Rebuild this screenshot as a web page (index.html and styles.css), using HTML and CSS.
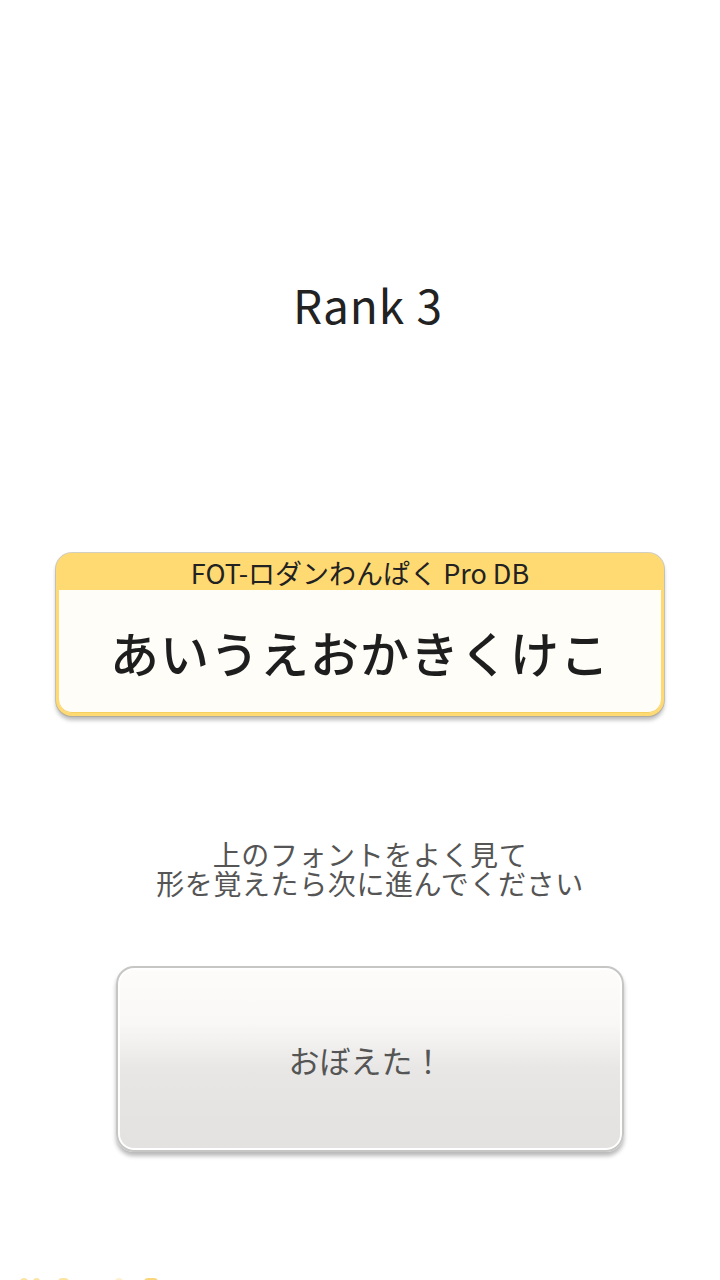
FILE: index.html
```html
<!DOCTYPE html>
<html lang="ja">
<head>
<meta charset="utf-8">
<title>Rank 3</title>
<link rel="stylesheet" href="styles.css">
</head>
<body>
<main class="screen">
  <h1 class="rank">Rank 3</h1>
  <section class="card">
    <div class="card-head">FOT-ロダンわんぱく Pro DB</div>
    <div class="card-body">あいうえおかきくけこ</div>
  </section>
  <p class="hint">上のフォントをよく見て<br>形を覚えたら次に進んでください</p>
  <button class="ok-btn" type="button">おぼえた！</button>
  <div class="footer">
    <span class="dot d1"></span><span class="dot d2"></span><span class="dot d3"></span><span class="dot d4"></span><span class="dot d5"></span>
  </div>
</main>
</body>
</html>
```
FILE: styles.css
```css
html, body {
  margin: 0;
  padding: 0;
  background: #ffffff;
}
body {
  width: 720px;
  height: 1280px;
  overflow: hidden;
  font-family: "Noto Sans CJK JP", "Noto Sans", sans-serif;
}
.screen {
  display: flex;
  flex-direction: column;
  align-items: center;
  height: 1280px;
  position: relative;
}
.rank {
  margin: 274px 0 0 16px;
  font-weight: 400;
  font-size: 46px;
  line-height: 60px;
  letter-spacing: 1px;
  color: #222222;
  font-family: "Noto Sans CJK JP", "Noto Sans", sans-serif;
}
.card {
  margin-top: 219px;
  width: 602px;
  background: #ffda73;
  border-radius: 16px;
  padding: 0 3px 3px;
  box-shadow: 0 0 0 1px rgba(160,150,120,0.45), 0 4px 4px rgba(0,0,0,0.28);
}
.card-head {
  height: 37px;
  line-height: 40px;
  text-align: center;
  font-size: 27px;
  color: #222;
}
.card-body {
  height: 123px;
  background: #fffdf8;
  border-radius: 0 0 13px 13px;
  display: flex;
  align-items: center;
  justify-content: center;
  font-size: 49px;
  font-weight: 500;
  color: #1e1e1e;
  letter-spacing: 1px;
  box-shadow: inset 0 -1px 0 #f5cf60;
}
.hint {
  margin: 124px 0 0 20px;
  text-align: center;
  font-size: 28px;
  line-height: 29px;
  letter-spacing: 0.6px;
  color: #555555;
}
.ok-btn {
  margin: 68px 0 0 20px;
  width: 508px;
  height: 186px;
  border: 2px solid #c6c6c4;
  border-radius: 18px;
  background: linear-gradient(180deg, #fdfcfa 0%, #f9f8f6 30%, #efeeec 45%, #e8e7e5 55%, #e5e4e2 75%, #e3e2e0 100%);
  box-shadow: inset 0 0 0 2px #ffffff, 0 4px 4px rgba(0,0,0,0.28);
  font-family: "Noto Sans CJK JP", "Noto Sans", sans-serif;
  font-size: 31px;
  color: #555555;
  padding: 0 8px 0 0;
}
.footer {
  position: absolute;
  left: 0;
  top: 1278px;
  width: 720px;
  height: 10px;
}
.dot {
  position: absolute;
  top: 0;
  height: 8px;
  border-radius: 4px;
  background: #fbe3a0;
}
.d1 { left: 20px; width: 8px; }
.d2 { left: 33px; width: 7px; }
.d3 { left: 58px; width: 11px; }
.d4 { left: 115px; width: 8px; background: #fdf0cc; }
.d5 { left: 144px; width: 14px; background: #f9d67a; }
```
